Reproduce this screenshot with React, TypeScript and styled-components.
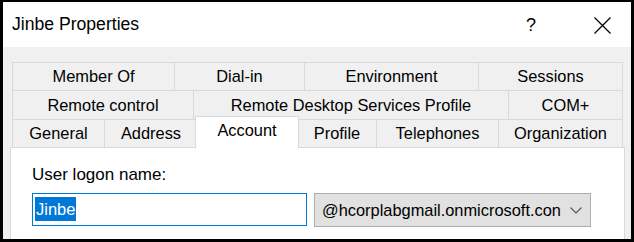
import React from "react";
import styled, { createGlobalStyle } from "styled-components";

const Global = createGlobalStyle`
  html, body { margin: 0; padding: 0; background: #000; }
  body { font-family: "Liberation Sans", Arial, sans-serif; }
  #root { width: 634px; height: 242px; }
`;

const Frame = styled.div`
  width: 634px;
  height: 242px;
  box-sizing: border-box;
  padding: 2px 3px 3px 3px;
  background: #000;
  display: flex;
`;

const Window = styled.div`
  flex: 1;
  display: flex;
  flex-direction: column;
  background: #f0f0f0;
  overflow: hidden;
`;

const TitleBar = styled.div`
  height: 45px;
  flex: none;
  background: #fff;
  display: flex;
  align-items: center;
  padding-left: 9px;
`;

const Title = styled.div`
  flex: 1;
  font-size: 17.6px;
  color: #000;
`;

const HelpGlyph = styled.div`
  font-size: 18px;
  color: #000;
  margin-right: 58px;
  margin-top: 1px;
`;

const CloseGlyph = styled.svg`
  width: 17px;
  height: 17px;
  margin-right: 20px;
  margin-top: 1px;
`;

const TabStrip = styled.div`
  margin: 15px 0 0 9px;
  width: 611px;
  display: flex;
  flex-direction: column;
  flex: none;
`;

const TabRow = styled.div<{ $h: number }>`
  display: flex;
  align-items: flex-start;
  height: ${(p) => p.$h}px;
`;

const Tab = styled.div<{ $w: number; $h: number; $last?: boolean; $active?: boolean }>`
  box-sizing: border-box;
  flex: none;
  width: ${(p) => (p.$active ? p.$w + 4 : p.$w)}px;
  height: ${(p) => (p.$active ? p.$h + 4 : p.$h)}px;
  margin: ${(p) => (p.$active ? "-3px -2px -1px -2px" : "0")};
  position: ${(p) => (p.$active ? "relative" : "static")};
  z-index: ${(p) => (p.$active ? 1 : 0)};
  background: ${(p) => (p.$active ? "#fff" : "#f0f0f0")};
  border-top: 1px solid #d9d9d9;
  border-left: 1px solid #d9d9d9;
  border-right: ${(p) => (p.$last || p.$active ? "1px solid #d9d9d9" : "none")};
  display: flex;
  align-items: center;
  justify-content: center;
  padding-bottom: ${(p) => (p.$active ? "4px" : "0")};
  font-size: 16.4px;
  color: #000;
  white-space: nowrap;
`;

const Panel = styled.div`
  flex: 1;
  margin-left: 7px;
  width: 615px;
  box-sizing: border-box;
  background: #fff;
  border: 1px solid #d9d9d9;
  border-bottom: none;
  padding: 17px 0 0 21px;
`;

const Label = styled.div`
  font-size: 17px;
  line-height: 19px;
  color: #000;
`;

const FieldRow = styled.div`
  display: flex;
  align-items: flex-start;
  margin-top: 9px;
`;

const TextBox = styled.div`
  box-sizing: border-box;
  width: 275px;
  height: 33px;
  border: 1px solid #0078d7;
  background: #fff;
  padding: 3px 0 0 2px;
`;

const Selection = styled.span`
  display: inline-block;
  background: #0078d7;
  color: #fff;
  font-size: 16.5px;
  line-height: 24px;
  padding: 0 1px;
`;

const Combo = styled.div`
  box-sizing: border-box;
  margin-left: 7px;
  width: 277px;
  height: 34px;
  background: #e1e1e1;
  border: 1px solid #adadad;
  display: flex;
  align-items: center;
  padding: 0 8px 0 7px;
`;

const ComboText = styled.div`
  white-space: nowrap;
  font-size: 16.4px;
  color: #000;
`;

const Chevron = styled.svg`
  width: 12px;
  height: 7px;
  margin-left: auto;
`;

const rows: { h: number; tabs: { label: string; w: number; active?: boolean }[] }[] = [
  {
    h: 28,
    tabs: [
      { label: "Member Of", w: 162 },
      { label: "Dial-in", w: 130 },
      { label: "Environment", w: 174 },
      { label: "Sessions", w: 145 },
    ],
  },
  {
    h: 29,
    tabs: [
      { label: "Remote control", w: 181 },
      { label: "Remote Desktop Services Profile", w: 315 },
      { label: "COM+", w: 115 },
    ],
  },
  {
    h: 28,
    tabs: [
      { label: "General", w: 92 },
      { label: "Address", w: 93 },
      { label: "Account", w: 100, active: true },
      { label: "Profile", w: 79 },
      { label: "Telephones", w: 122 },
      { label: "Organization", w: 125 },
    ],
  },
];

export default function App() {
  return (
    <>
      <Global />
      <Frame>
        <Window>
          <TitleBar>
            <Title>Jinbe Properties</Title>
            <HelpGlyph>?</HelpGlyph>
            <CloseGlyph viewBox="0 0 17 17">
              <path d="M0.5 0.5 L16.5 16.5 M16.5 0.5 L0.5 16.5" stroke="#000" strokeWidth="1.2" fill="none" />
            </CloseGlyph>
          </TitleBar>
          <TabStrip>
            {rows.map((row, ri) => (
              <TabRow key={ri} $h={row.h}>
                {row.tabs.map((t, ti) => (
                  <Tab
                    key={t.label}
                    $w={t.w}
                    $h={row.h}
                    $active={t.active}
                    $last={ti === row.tabs.length - 1}
                  >
                    {t.label}
                  </Tab>
                ))}
              </TabRow>
            ))}
          </TabStrip>
          <Panel>
            <Label>User logon name:</Label>
            <FieldRow>
              <TextBox>
                <Selection>Jinbe</Selection>
              </TextBox>
              <Combo>
                <ComboText>@hcorplabgmail.onmicrosoft.con</ComboText>
                <Chevron viewBox="0 0 12 7">
                  <path d="M0.5 0.5 L6 6 L11.5 0.5" stroke="#555" strokeWidth="1.1" fill="none" />
                </Chevron>
              </Combo>
            </FieldRow>
          </Panel>
        </Window>
      </Frame>
    </>
  );
}
